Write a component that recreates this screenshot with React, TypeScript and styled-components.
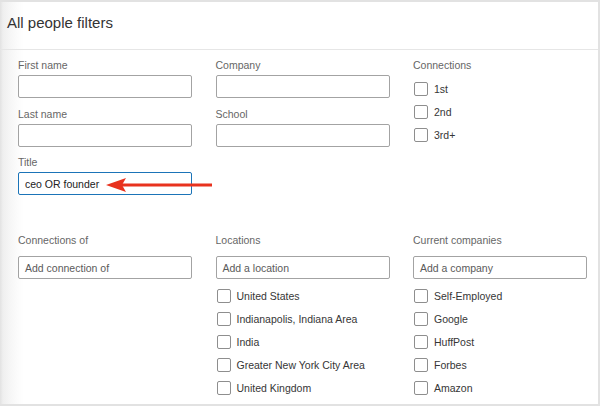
import React from 'react'
import styled, { createGlobalStyle } from 'styled-components'

const GlobalStyle = createGlobalStyle`
  html, body {
    margin: 0;
    padding: 0;
    background: #fff;
  }
  body {
    font-family: 'Liberation Sans', Arial, sans-serif;
  }
`

const Frame = styled.div`
  position: relative;
  box-sizing: border-box;
  width: 600px;
  height: 406px;
  border-top: 2px solid #e2e2e2;
  border-right: 2px solid #e2e2e2;
  border-bottom: 2px solid #e2e2e2;
  background: linear-gradient(to right, #e2e2e2 0px, #efefef 3px, #f6f6f6 10px, #fcfcfc 18px, #fff 24px);
  overflow: hidden;
`

const Header = styled.div`
  box-sizing: border-box;
  height: 48px;
  padding: 12px 0 0 7px;
  border-bottom: 1px solid #e6e6e6;
  font-size: 15px;
  line-height: 18px;
  color: #333;
`

const Body = styled.div`
  padding: 9px 0 0 18px;
`

const Section = styled.div<{ $top?: number }>`
  display: grid;
  grid-template-columns: 174px 174px 174px;
  column-gap: 23.5px;
  align-items: start;
  margin-top: ${p => p.$top || 0}px;
`

const Column = styled.div`
  display: flex;
  flex-direction: column;
  gap: 9.5px;
`

const Field = styled.div`
  display: flex;
  flex-direction: column;
`

const Label = styled.div<{ $gap?: number }>`
  font-size: 10.5px;
  line-height: 13px;
  color: #666;
  margin-bottom: ${p => p.$gap ?? 3}px;
`

const Input = styled.div<{ $active?: boolean; $placeholder?: boolean }>`
  box-sizing: border-box;
  height: 23px;
  padding: 0 6px;
  display: flex;
  align-items: center;
  border: 1px solid ${p => (p.$active ? '#1b74b8' : '#a3a3a3')};
  border-radius: 2px;
  background: #fff;
  font-size: 10.5px;
  color: ${p => (p.$placeholder ? '#5a5a5a' : '#222')};
`

const CheckList = styled.div<{ $top: number }>`
  display: flex;
  flex-direction: column;
  margin-top: ${p => p.$top}px;
`

const CheckRow = styled.label`
  display: flex;
  align-items: center;
  height: 23px;
  gap: 6px;
  font-size: 10.5px;
  color: #363636;
`

const Box = styled.span`
  box-sizing: border-box;
  width: 14px;
  height: 14px;
  margin-left: 1px;
  border: 1px solid #8e8e8e;
  border-radius: 2px;
  background: #fff;
`

const Arrow = styled.svg`
  position: absolute;
  left: 106px;
  top: 175px;
`

const Checks = ({ items, top }: { items: string[]; top: number }) => (
  <CheckList $top={top}>
    {items.map(item => (
      <CheckRow key={item}>
        <Box />
        {item}
      </CheckRow>
    ))}
  </CheckList>
)

export default function App() {
  return (
    <>
      <GlobalStyle />
      <Frame>
        <Header>All people filters</Header>
        <Body>
          <Section>
            <Column>
              <Field>
                <Label>First name</Label>
                <Input />
              </Field>
              <Field>
                <Label>Last name</Label>
                <Input />
              </Field>
              <Field>
                <Label>Title</Label>
                <Input $active>ceo OR founder</Input>
              </Field>
            </Column>
            <Column>
              <Field>
                <Label>Company</Label>
                <Input />
              </Field>
              <Field>
                <Label>School</Label>
                <Input />
              </Field>
            </Column>
            <Field>
              <Label $gap={0}>Connections</Label>
              <Checks items={['1st', '2nd', '3rd+']} top={5} />
            </Field>
          </Section>
          <Section $top={39}>
            <Field>
              <Label $gap={9}>Connections of</Label>
              <Input $placeholder>Add connection of</Input>
            </Field>
            <Field>
              <Label $gap={9}>Locations</Label>
              <Input $placeholder>Add a location</Input>
              <Checks
                items={[
                  'United States',
                  'Indianapolis, Indiana Area',
                  'India',
                  'Greater New York City Area',
                  'United Kingdom',
                ]}
                top={5}
              />
            </Field>
            <Field>
              <Label $gap={9}>Current companies</Label>
              <Input $placeholder>Add a company</Input>
              <Checks items={['Self-Employed', 'Google', 'HuffPost', 'Forbes', 'Amazon']} top={5} />
            </Field>
          </Section>
        </Body>
        <Arrow width="108" height="16" viewBox="0 0 108 16">
          <rect x="16" y="6.5" width="90" height="3" fill="#e8321e" />
          <path d="M0 8 L20 1 L16 8 L20 15 Z" fill="#e8321e" />
        </Arrow>
      </Frame>
    </>
  )
}
